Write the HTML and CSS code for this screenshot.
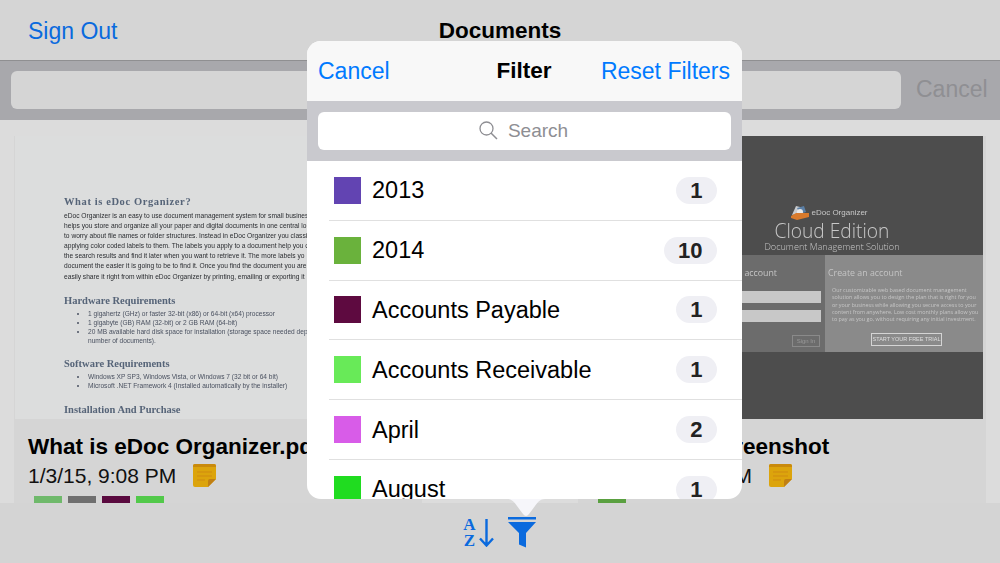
FILE: index.html
```html
<!DOCTYPE html>
<html lang="en">
<head>
    <meta charset="UTF-8">
    <title>Documents</title>
    <link rel="stylesheet" href="styles.css">
</head>
<body>
    <div class="screen">
        <header class="nav">
            <a class="nav-link">Sign Out</a>
            <h1>Documents</h1>
        </header>

        <div class="search-bar">
            <div class="search-field"></div>
            <span class="search-cancel">Cancel</span>
        </div>

        <main class="documents">
            <article class="card">
                <div class="thumb doc-page">
                    <h2 class="first">What is eDoc Organizer?</h2>
                    <p>eDoc Organizer is an easy to use document management system for small business</p>
                    <p>helps you store and organize all your paper and digital documents in one central lo</p>
                    <p>to worry about file names or folder structures. Instead in eDoc Organizer you classi</p>
                    <p>applying color coded labels to them. The labels you apply to a document help you c</p>
                    <p>the search results and find it later when you want to retrieve it. The more labels yo</p>
                    <p>document the easier it is going to be to find it. Once you find the document you are</p>
                    <p>easily share it right from within eDoc Organizer by printing, emailing or exporting it</p>
                    <h2 class="hardware">Hardware Requirements</h2>
                    <ul>
                        <li>1 gigahertz (GHz) or faster 32-bit (x86) or 64-bit (x64) processor</li>
                        <li>1 gigabyte (GB) RAM (32-bit) or 2 GB RAM (64-bit)</li>
                        <li>20 MB available hard disk space for installation (storage space needed dep<br>number of documents).</li>
                    </ul>
                    <h2 class="software">Software Requirements</h2>
                    <ul>
                        <li>Windows XP SP3, Windows Vista, or Windows 7 (32 bit or 64 bit)</li>
                        <li>Microsoft .NET Framework 4 (Installed automatically by the installer)</li>
                    </ul>
                    <h2 class="install">Installation And Purchase</h2>
                </div>
                <div class="card-title">What is eDoc Organizer.pdf</div>
                <div class="card-meta">
                    <span>1/3/15, 9:08 PM</span>
                    <svg class="note" viewBox="0 0 23 23">
                        <path d="M2 0h19a2 2 0 0 1 2 2v13l-8 8H2a2 2 0 0 1-2-2V2a2 2 0 0 1 2-2z" fill="#dca40c"/>
                        <path d="M0 3V2a2 2 0 0 1 2-2h19a2 2 0 0 1 2 2v1z" fill="#c98a0c"/>
                        <path d="M4 8h15M4 12h15M4 16h8" stroke="#cf8a10" stroke-width="1"/>
                        <path d="M23 15h-6a2 2 0 0 0-2 2v6z" fill="#c07f14"/>
                    </svg>
                </div>
                <div class="labels">
                    <i class="label label-a"></i>
                    <i class="label label-b"></i>
                    <i class="label label-c"></i>
                    <i class="label label-d"></i>
                </div>
            </article>

            <article class="card">
                <div class="thumb cloud-page">
                    <div class="cloud-head">
                        <div class="cloud-brand">
                            <svg class="cloud-logo" viewBox="0 0 18 17">
                                <path d="M1 11l4-9 8 2-2 5z" fill="#c9ccd0"/>
                                <path d="M6 4l7-2 2 6-6 2z" fill="#5b7fa5"/>
                                <circle cx="9" cy="8" r="3" fill="#e8e8e8"/>
                                <path d="M0 12l5-3 13 0 0 4-12 3-6-2z" fill="#d87a2c"/>
                            </svg>
                            <span>eDoc Organizer</span>
                        </div>
                        <div class="cloud-title">Cloud Edition</div>
                        <div class="cloud-sub">Document Management Solution</div>
                    </div>
                    <div class="cloud-band">
                        <div class="cloud-signin">
                            <div class="band-title">Sign in to your account</div>
                            <div class="fake-input"></div>
                            <div class="fake-input"></div>
                            <span class="signin-btn">Sign In</span>
                        </div>
                        <div class="cloud-create">
                            <div class="band-title">Create an account</div>
                            <p>Our customizable web based document management solution allows you to design the plan that is right for you or your business while allowing you secure access to your content from anywhere. Low cost monthly plans allow you to pay as you go, without requiring any initial investment.</p>
                            <span class="trial-btn">START YOUR FREE TRIAL</span>
                        </div>
                    </div>
                </div>
                <div class="card-title">eDoc Web Screenshot</div>
                <div class="card-meta">
                    <span>1/13/15, 9:08 PM</span>
                    <svg class="note" viewBox="0 0 23 23">
                        <path d="M2 0h19a2 2 0 0 1 2 2v13l-8 8H2a2 2 0 0 1-2-2V2a2 2 0 0 1 2-2z" fill="#dca40c"/>
                        <path d="M0 3V2a2 2 0 0 1 2-2h19a2 2 0 0 1 2 2v1z" fill="#c98a0c"/>
                        <path d="M4 8h15M4 12h15M4 16h8" stroke="#cf8a10" stroke-width="1"/>
                        <path d="M23 15h-6a2 2 0 0 0-2 2v6z" fill="#c07f14"/>
                    </svg>
                </div>
                <div class="labels">
                    <i class="label label-e"></i>
                </div>
            </article>
        </main>

        <footer class="toolbar">
            <div class="sort-icon">
                <span class="az"><b>A</b><b>Z</b></span>
                <svg class="sort-arrow" width="15" height="28" viewBox="0 0 15 28">
                    <path d="M7.500 0v26M1 19.500l6.500 7 6.500-7" fill="none" stroke="#0a6ade" stroke-width="2.400"/>
                </svg>
            </div>
            <svg class="funnel" width="29" height="31" viewBox="0 0 29 31">
                <path d="M0 0h28v2.500H0z" fill="#0a6ade"/>
                <path d="M0 5h28L18 16V30.500L11 27.500V16z" fill="#0a6ade"/>
            </svg>
        </footer>

        <section class="popover">
            <div class="pop-head">
                <a>Cancel</a>
                <strong>Filter</strong>
                <a class="pop-reset">Reset Filters</a>
            </div>
            <div class="pop-search">
                <div class="pop-field">
                    <svg width="19" height="19" viewBox="0 0 19 19">
                        <circle cx="7.500" cy="7.500" r="6.500" fill="none" stroke="#8e8e93" stroke-width="1.300"/>
                        <path d="M12 12l6 6" stroke="#8e8e93" stroke-width="1.500"/>
                    </svg>
                    <span>Search</span>
                </div>
            </div>
            <ul class="filter-list" id="filterList"></ul>
        </section>
        <svg class="pop-arrow" width="38" height="18" viewBox="0 0 38 18">
            <path d="M0 0H38C33 0 31 3 28 7L22 15C20 17.500 18 17.500 16 15L10 7C7 3 5 0 0 0z" fill="#f6f6fa"/>
        </svg>
    </div>

    <script>
        const filters = [
            ['2013', '#6244b2', 1],
            ['2014', '#6ab23c', 10],
            ['Accounts Payable', '#5e0a40', 1],
            ['Accounts Receivable', '#68ea58', 1],
            ['April', '#d85ce8', 2],
            ['August', '#20dc20', 1]
        ];

        const list = document.getElementById('filterList');
        filters.forEach(([name, color, count]) => {
            const row = document.createElement('li');
            row.className = 'filter-row';
            row.innerHTML = `<i class="swatch" style="background:${color}"></i>` +
                `<span class="filter-name">${name}</span>` +
                `<span class="badge">${count}</span>`;
            list.appendChild(row);
        });
    </script>
</body>
</html>
```

FILE: styles.css
```css
* {
    margin: 0;
    padding: 0;
    box-sizing: border-box;
}

body {
    font-family: 'Liberation Sans', Arial, sans-serif;
    background: #d4d4d4;
    color: #000;
}

.screen {
    position: relative;
    width: 1000px;
    height: 563px;
    overflow: hidden;
    display: flex;
    flex-direction: column;
}

/* top bar */
.nav {
    height: 61px;
    flex: none;
    position: relative;
    display: flex;
    align-items: center;
    padding: 2px 28px 0;
    background: #d5d5d5;
    border-bottom: 1px solid #8f8f91;
}

.nav-link {
    font-size: 23px;
    color: #0a6ade;
}

.nav h1 {
    position: absolute;
    left: 0;
    right: 0;
    text-align: center;
    font-size: 22.500px;
    font-weight: bold;
}

.search-bar {
    height: 59px;
    flex: none;
    display: flex;
    align-items: center;
    padding: 0 0 2px 11px;
    background: #a8a8ac;
}

.search-field {
    width: 890px;
    flex: none;
    height: 38px;
    background: #d5d5d5;
    border-radius: 6px;
}

.search-cancel {
    margin-left: 15px;
    font-size: 23px;
    color: #8f8f93;
}

/* cards */
.documents {
    height: 383px;
    flex: none;
    overflow: hidden;
    display: grid;
    grid-template-columns: 408px 408px;
    justify-content: space-between;
    padding: 16px 14px 0 14px;
    background: #dcdcdc;
}

.card {
    background: #d5d5d5;
    padding: 0 3px 0 1px;
    height: 367px;
}

.thumb {
    height: 283px;
    width: 404px;
    overflow: hidden;
}

.card-title {
    margin: 14px 0 0 13px;
    font-size: 22.500px;
    line-height: 28px;
    font-weight: bold;
    white-space: nowrap;
}

.card-meta {
    display: flex;
    align-items: center;
    gap: 17px;
    margin: 2px 0 0 13px;
    font-size: 21px;
    height: 25px;
    color: #111;
}

.note {
    width: 23px;
    height: 23px;
}

.labels {
    display: flex;
    gap: 6px;
    margin: 8px 0 0 19px;
}

.label {
    width: 28px;
    height: 14px;
}

.label-a { background: #6fb96b; }
.label-b { background: #6f6f6f; }
.label-c { background: #5a0a3f; }
.label-d { background: #52c94a; }
.label-e { background: #5aa040; }

/* first thumbnail, a page of text */
.doc-page {
    background: #dcdddd;
    padding: 59px 0 0 49px;
    white-space: nowrap;
    font-size: 6.650px;
    color: #2a2c30;
    filter: blur(0.35px);
}

.doc-page h2 {
    font-family: 'Liberation Serif', serif;
    font-weight: bold;
    font-size: 10.500px;
    line-height: 14px;
    color: #566478;
}

.doc-page p {
    line-height: 10.100px;
}

.doc-page .first { margin-bottom: 2px; letter-spacing: 0.6px; }
.doc-page .hardware { margin-top: 12px; margin-bottom: 1px; }
.doc-page .software { margin-top: 12px; margin-bottom: 1px; }
.doc-page .install { margin-top: 13px; }

.doc-page ul {
    list-style: disc;
    padding-left: 24px;
    font-size: 6.600px;
    color: #4a5160;
}

.doc-page li {
    line-height: 9px;
}

/* second thumbnail, a sign-in page */
.cloud-page {
    display: flex;
    flex-direction: column;
    background: #4d4d4d;
    color: #c8c8c8;
    filter: blur(0.3px);
}

.cloud-head {
    height: 119px;
    flex: none;
    padding: 68px 0 0 102px;
    text-align: center;
    width: 404px;
}

.cloud-brand {
    display: flex;
    align-items: center;
    justify-content: center;
    gap: 2px;
    height: 16px;
    font-size: 8px;
    margin-right: 5px;
}

.cloud-logo {
    width: 18px;
    height: 17px;
}

.cloud-title {
    font-family: 'Open Sans', sans-serif;
    font-weight: 300;
    font-size: 19.200px;
    line-height: 21px;
}

.cloud-sub {
    font-family: 'Open Sans', sans-serif;
    font-weight: 300;
    font-size: 9.100px;
    line-height: 11px;
    white-space: nowrap;
}

.cloud-band {
    height: 97px;
    flex: none;
    display: flex;
}

.cloud-signin {
    width: 246px;
    flex: none;
    background: #6c6c6c;
    padding: 12px 4px 0 0;
    display: flex;
    flex-direction: column;
    align-items: flex-end;
}

.cloud-signin .band-title {
    white-space: nowrap;
    margin-right: 44px;
}

.band-title {
    font-family: 'Open Sans', sans-serif;
    font-size: 8.800px;
    line-height: 12px;
    color: #c4c4c4;
}

.fake-input {
    width: 200px;
    height: 12px;
    background: #c8c8c8;
    margin-top: 7px;
}

.cloud-signin .band-title + .fake-input {
    margin-top: 12px;
}

.signin-btn {
    margin-top: 13px;
    margin-right: 1px;
    width: 28px;
    height: 12px;
    border: 1px solid #8a8a8a;
    font-size: 6px;
    line-height: 10px;
    text-align: center;
    color: #999;
}

.cloud-create {
    flex: 1;
    background: #8a8a8a;
    padding: 12px 4px 0 3px;
}

.cloud-create p {
    margin-top: 8px;
    padding-left: 4px;
    font-family: 'Open Sans', sans-serif;
    font-size: 5.400px;
    line-height: 7.300px;
    color: #c6c6c6;
}

.trial-btn {
    display: block;
    width: 71px;
    height: 13px;
    margin: 10px 0 0 43px;
    border: 1px solid #d4d4d4;
    font-size: 5.500px;
    line-height: 11px;
    text-align: center;
    color: #dedede;
    white-space: nowrap;
}

/* bottom toolbar */
.toolbar {
    height: 60px;
    flex: none;
    position: relative;
    z-index: 1;
    display: flex;
    align-items: flex-start;
    justify-content: center;
    gap: 14px;
    padding-top: 14px;
    background: #d4d4d4;
}

.sort-icon {
    display: flex;
    align-items: flex-start;
    gap: 3px;
    width: 31px;
}

.az {
    display: flex;
    flex-direction: column;
    align-items: center;
    width: 13px;
    font-family: 'Liberation Serif', serif;
    font-size: 17px;
    line-height: 16px;
    color: #0a6ade;
}

.sort-arrow {
    flex: none;
    margin-top: 2px;
}

.funnel {
    display: block;
}

/* filter popover */
.popover {
    position: absolute;
    z-index: 2;
    left: 307px;
    top: 41px;
    width: 435px;
    height: 458px;
    background: #fff;
    border-radius: 14px;
    overflow: hidden;
}

.pop-arrow {
    position: absolute;
    z-index: 2;
    left: 507px;
    top: 499px;
}

.pop-head {
    height: 60px;
    display: grid;
    grid-template-columns: 1fr auto 1fr;
    align-items: center;
    padding: 0 12px 0 11px;
    background: #f8f8f8;
    font-size: 23px;
    color: #007aff;
}

.pop-head strong {
    color: #000;
    font-size: 22.500px;
}

.pop-reset {
    justify-self: end;
}

.pop-search {
    height: 60px;
    padding: 11px;
    background: #c9c9ce;
}

.pop-field {
    height: 38px;
    display: flex;
    align-items: center;
    justify-content: center;
    gap: 10px;
    padding: 0 2px 1px 0;
    background: #fff;
    border-radius: 6px;
    font-size: 19px;
    color: #8e8e93;
}

.filter-list {
    list-style: none;
}

.filter-row {
    height: 59.800px;
    display: flex;
    align-items: center;
    margin-left: 22px;
    padding: 0 25px 0 5px;
    border-bottom: 1px solid #e0e0e0;
}

.swatch {
    width: 27px;
    height: 27px;
    flex: none;
}

.filter-name {
    flex: 1;
    margin-left: 11px;
    padding-top: 1px;
    font-size: 23.500px;
}

.badge {
    min-width: 40px;
    height: 27px;
    padding: 0 14.500px;
    border-radius: 14px;
    background: #efeff4;
    font-size: 22px;
    line-height: 27px;
    font-weight: bold;
    text-align: center;
    color: #222;
}
```
